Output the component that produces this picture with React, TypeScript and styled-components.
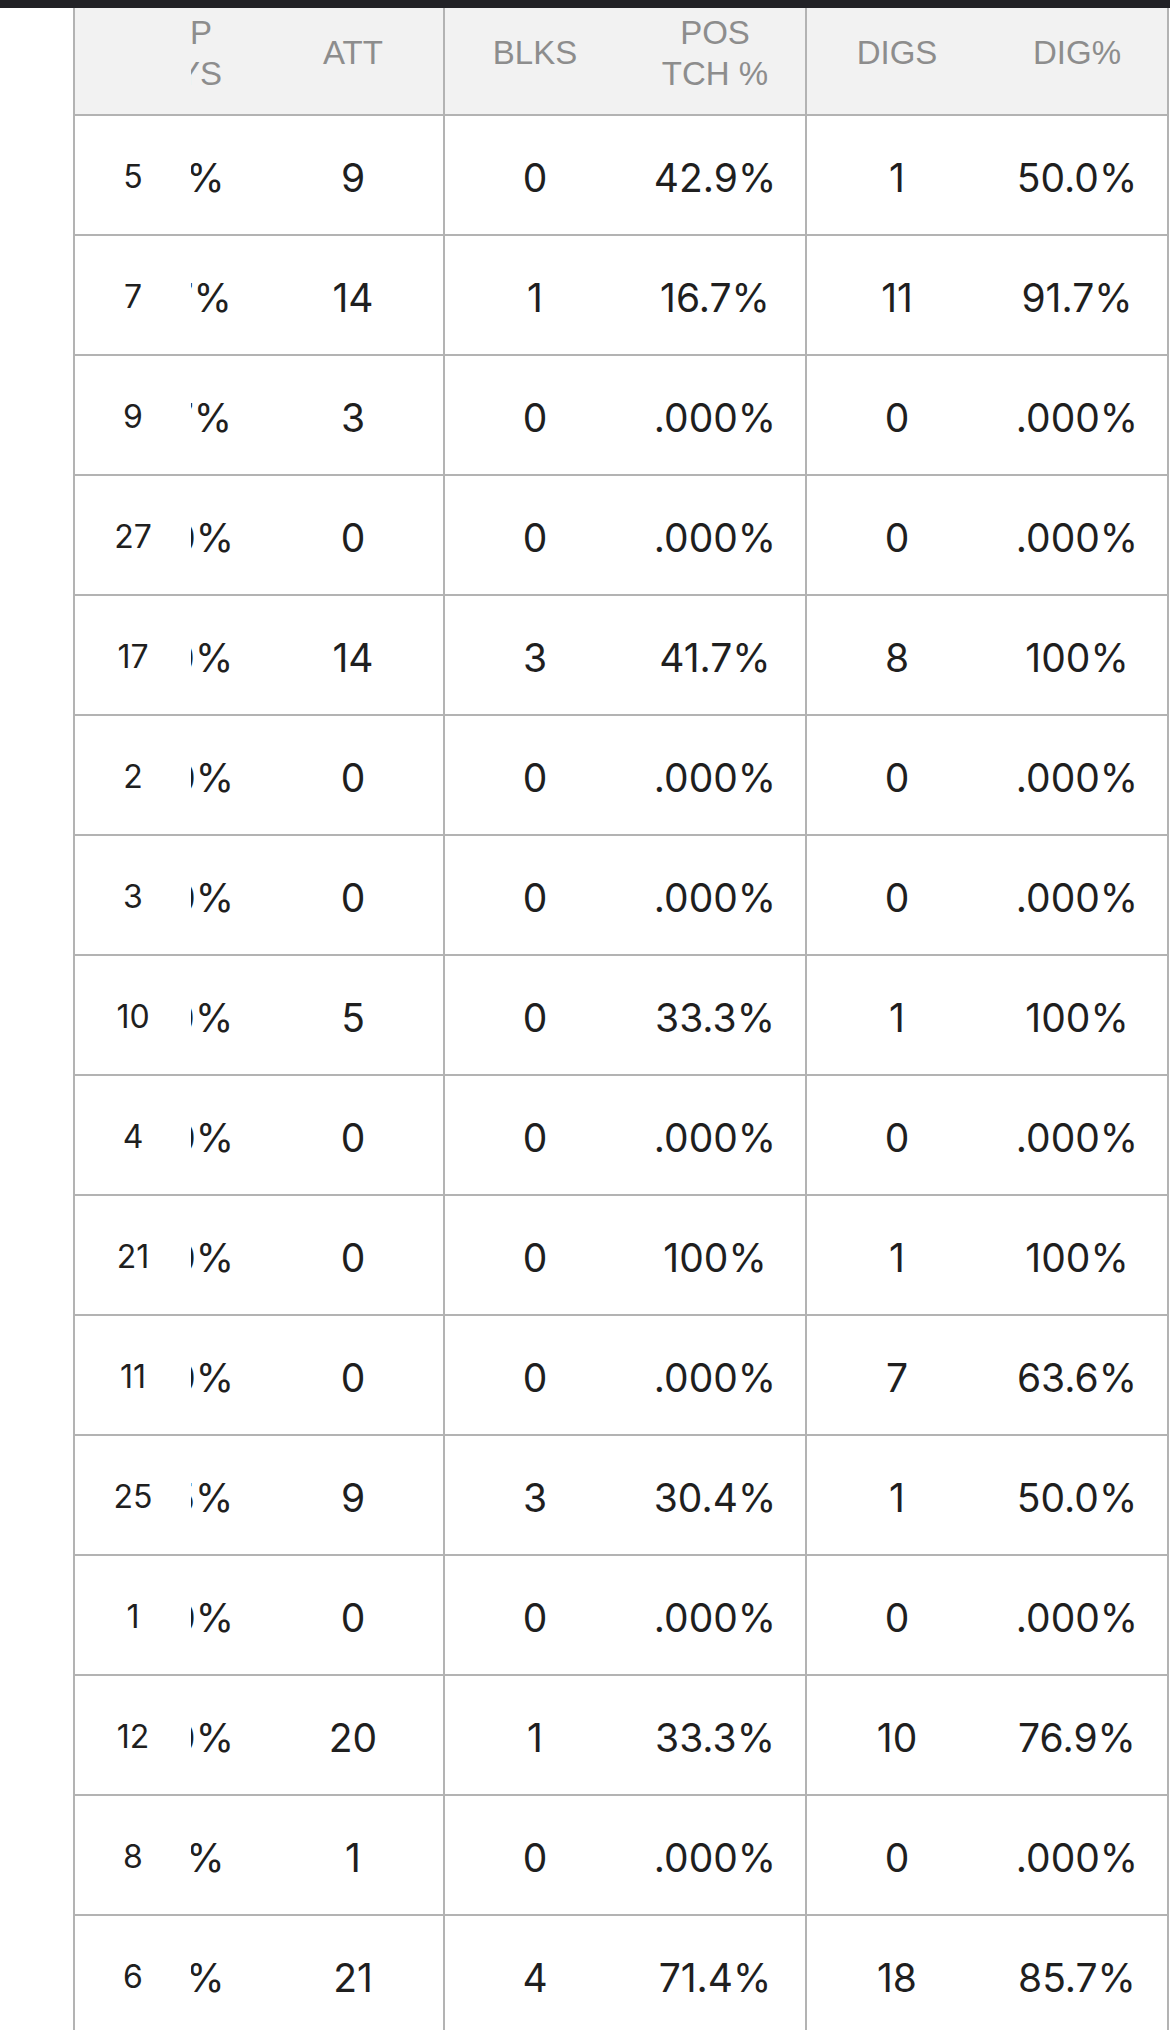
import React, { FC } from 'react';
import styled, { createGlobalStyle } from 'styled-components';

const GlobalStyle = createGlobalStyle`
  html, body {
    margin: 0;
    padding: 0;
    background: #ffffff;
  }
  body {
    font-family: "Inter", "Liberation Sans", sans-serif;
  }
`;

const COLS = '116px 72px 180px 182px 180px 182px 180px';
const LINE = '#b3b3b3';

const StatusBar = styled.div`
  height: 8px;
  background: #222226;
`;

const TableWrapper = styled.div`
  margin-left: 73px;
  width: 1092px;
  border-left: 2px solid ${LINE};
  border-right: 2px solid ${LINE};
`;

const HeadRow = styled.div`
  display: grid;
  grid-template-columns: ${COLS};
  height: 106px;
  background: #f2f2f2;
  border-bottom: 2px solid ${LINE};
`;

const Row = styled.div`
  display: grid;
  grid-template-columns: ${COLS};
  height: 118px;
  border-bottom: 2px solid ${LINE};
`;

const HeadCell = styled.div<{ $divider?: boolean }>`
  display: flex;
  align-items: center;
  justify-content: center;
  padding-bottom: 17px;
  box-sizing: border-box;
  border-left: ${(p) => (p.$divider ? `2px solid ${LINE}` : 'none')};
  font-family: "Liberation Sans", Arial, sans-serif;
  font-size: 33px;
  line-height: 41px;
  color: #8d8d8d;
  text-align: center;
  white-space: pre-line;
`;

const Cell = styled.div<{ $divider?: boolean }>`
  display: flex;
  align-items: center;
  justify-content: center;
  padding-top: 4px;
  box-sizing: border-box;
  border-left: ${(p) => (p.$divider ? `2px solid ${LINE}` : 'none')};
  font-family: "Inter", "Liberation Sans", sans-serif;
  font-size: 39px;
  color: #1f1f1f;
`;

const NumberCell = styled(Cell)`
  font-size: 32px;
  padding-top: 3px;
  background: #ffffff;
`;

// column scrolled under the fixed jersey column: only its right end shows
const ClippedCell = styled.div<{ $head?: boolean }>`
  display: flex;
  justify-content: flex-end;
  align-items: center;
  overflow: hidden;
  padding-top: ${(p) => (p.$head ? '0' : '4px')};
  padding-bottom: ${(p) => (p.$head ? '17px' : '0')};
  box-sizing: border-box;
`;

const ClippedInner = styled.div<{ $head?: boolean }>`
  flex: 0 0 180px;
  text-align: center;
  font-family: ${(p) => (p.$head ? '"Liberation Sans", Arial, sans-serif' : '"Inter", "Liberation Sans", sans-serif')};
  font-size: ${(p) => (p.$head ? '33px' : '39px')};
  line-height: ${(p) => (p.$head ? '41px' : 'normal')};
  color: ${(p) => (p.$head ? '#8d8d8d' : '#1f1f1f')};
`;

const HeadLine = styled.span<{ $nudge: number }>`
  display: block;
  padding-left: ${(p) => (p.$nudge > 0 ? p.$nudge * 2 : 0)}px;
  padding-right: ${(p) => (p.$nudge < 0 ? -p.$nudge * 2 : 0)}px;
`;

type Line = [string, string, string, string, string, string, string];

const rows: Line[] = [
  ['5', '57.1%', '9', '0', '42.9%', '1', '50.0%'],
  ['7', '85.7%', '14', '1', '16.7%', '11', '91.7%'],
  ['9', '66.7%', '3', '0', '.000%', '0', '.000%'],
  ['27', '.000%', '0', '0', '.000%', '0', '.000%'],
  ['17', '50.0%', '14', '3', '41.7%', '8', '100%'],
  ['2', '.000%', '0', '0', '.000%', '0', '.000%'],
  ['3', '.000%', '0', '0', '.000%', '0', '.000%'],
  ['10', '50.0%', '5', '0', '33.3%', '1', '100%'],
  ['4', '.000%', '0', '0', '.000%', '0', '.000%'],
  ['21', '.000%', '0', '0', '100%', '1', '100%'],
  ['11', '.000%', '0', '0', '.000%', '7', '63.6%'],
  ['25', '62.5%', '9', '3', '30.4%', '1', '50.0%'],
  ['1', '.000%', '0', '0', '.000%', '0', '.000%'],
  ['12', '40.0%', '20', '1', '33.3%', '10', '76.9%'],
  ['8', '57.1%', '1', '0', '.000%', '0', '.000%'],
  ['6', '57.1%', '21', '4', '71.4%', '18', '85.7%'],
];

const App: FC = () => {
  return (
    <>
      <GlobalStyle />
      <StatusBar />
      <TableWrapper>
        <HeadRow>
          <HeadCell />
          <ClippedCell $head>
            <ClippedInner $head>
              <HeadLine $nudge={5}>REP</HeadLine>
              <HeadLine $nudge={-3}>PLAYS</HeadLine>
            </ClippedInner>
          </ClippedCell>
          <HeadCell>ATT</HeadCell>
          <HeadCell $divider>BLKS</HeadCell>
          <HeadCell>{'POS\nTCH %'}</HeadCell>
          <HeadCell $divider>DIGS</HeadCell>
          <HeadCell>DIG%</HeadCell>
        </HeadRow>
        {rows.map((r) => (
          <Row key={r[0]}>
            <NumberCell>{r[0]}</NumberCell>
            <ClippedCell>
              <ClippedInner>{r[1]}</ClippedInner>
            </ClippedCell>
            <Cell>{r[2]}</Cell>
            <Cell $divider>{r[3]}</Cell>
            <Cell>{r[4]}</Cell>
            <Cell $divider>{r[5]}</Cell>
            <Cell>{r[6]}</Cell>
          </Row>
        ))}
      </TableWrapper>
    </>
  );
};

export default App;
